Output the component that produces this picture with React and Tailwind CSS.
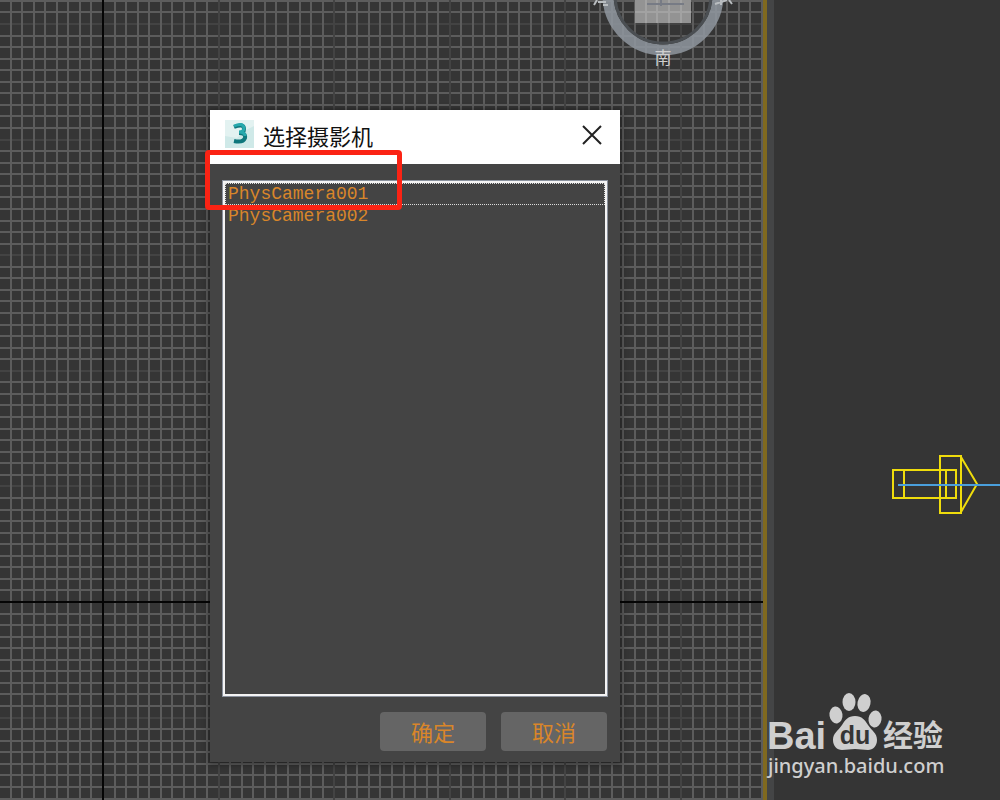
// App.jsx
import React, { useState } from 'react';

const CELL = 11.56;
const AXIS_X = 103;
const AXIS_Y = 602;

// grid steps counted from the origin axis, every tenth one is faint
const steps = (axis, max) => {
  const out = [];
  for (let i = -Math.floor(axis / CELL); axis + i * CELL < max; i++) {
    if (i !== 0) out.push({ pos: Math.round(axis + i * CELL), major: i % 10 === 0 });
  }
  return out;
};

const columns = steps(AXIS_X, 2600);
const rows = steps(AXIS_Y, 1600);

function Grid() {
  const color = l => (l.major ? '#434343' : '#5c5c5c');
  const order = list => [...list].sort((a, b) => b.major - a.major);
  return (
    <svg className="absolute inset-0 h-full w-full" aria-hidden="true" strokeWidth="2">
      {order(rows).map(l => <line key={'r' + l.pos} x1="0" x2="2600" y1={l.pos} y2={l.pos} stroke={color(l)} />)}
      {order(columns).map(l => <line key={'c' + l.pos} x1={l.pos} x2={l.pos} y1="0" y2="1600" stroke={color(l)} />)}
      <line x1="0" x2="2600" y1={AXIS_Y} y2={AXIS_Y} stroke="#050505" strokeWidth="2" />
      <line x1={AXIS_X} x2={AXIS_X} y1="0" y2="1600" stroke="#050505" strokeWidth="2" />
    </svg>
  );
}

function ViewCube() {
  return (
    <svg className="absolute top-0 right-[30px]" width="140" height="76" viewBox="0 0 140 76" aria-hidden="true">
      <circle cx="70" cy="-5" r="55" fill="none" stroke="#8f979f" strokeOpacity="0.85" strokeWidth="11" />
      <circle cx="70" cy="-5" r="48" fill="none" stroke="#4b4f53" strokeWidth="3" />
      <rect x="42" y="-10" width="56" height="33" fill="#939393" />
      <path d="M42 12h56M53 0v23M64 0v23M76 0v23M88 0v23" stroke="#a2a2a2" strokeWidth="2" />
      <path d="M54 4h36M68 0v6M85 4h6" stroke="#777b85" strokeWidth="2" fill="none" />
      <path d="M1 5l3-5M5 2h8M10 5h5M122 4l12-4M128 0v5M136 0l3 4" stroke="#b9bdc0" strokeWidth="2" />
      <text x="70" y="64" textAnchor="middle" fontSize="17" fill="#cfcfcf" className="font-['Noto_Sans_CJK_SC',sans-serif]">南</text>
    </svg>
  );
}

function CameraGizmo() {
  return (
    <svg className="absolute top-[450px] right-0" width="110" height="70" viewBox="0 0 110 70" fill="none" strokeWidth="2" aria-hidden="true">
      <g stroke="#efdc0c">
        <path d="M3 20h63v28H3zM14 20v28M56 20v28" />
        <path d="M50 6h21v57H50z" />
        <path d="M71 7l16 27-16 28" />
      </g>
      <path d="M8 35h102" stroke="#4a9fdc" />
    </svg>
  );
}

function Watermark() {
  return (
    <div className="absolute right-[52px] bottom-[22px] w-[182px] text-[#cfcfcf]">
      <svg width="182" height="76" viewBox="0 0 182 76" fill="currentColor" role="img" aria-label="Baidu 经验">
        <text x="1" y="59" fontSize="38" fontWeight="700" className="font-['Liberation_Sans',sans-serif]">Bai</text>
        <ellipse cx="70" cy="25" rx="6.5" ry="8.5" transform="rotate(-8 70 25)" />
        <ellipse cx="83" cy="12" rx="6.5" ry="9" />
        <ellipse cx="98" cy="13" rx="6.5" ry="9" transform="rotate(12 98 13)" />
        <ellipse cx="109" cy="29" rx="6.5" ry="8.5" transform="rotate(8 109 29)" />
        <path d="M89 26c7 0 10 4 13 9 4 6 9 8 9 15 0 6-4 10-9 10-5 0-8-1-13-1s-8 1-13 1c-5 0-9-4-9-10 0-7 5-9 9-15 3-5 6-9 13-9z" />
        <text x="89" y="54" textAnchor="middle" fontSize="25" fontWeight="700" fill="#353535" className="font-['Liberation_Sans',sans-serif]">du</text>
        <text x="117" y="56" fontSize="30" fontWeight="700" className="font-['Noto_Sans_CJK_SC',sans-serif]">经验</text>
      </svg>
      <p className="-mt-[12px] pl-[2px] font-['Noto_Sans',sans-serif] text-[20px] leading-[24px] font-medium whitespace-nowrap">jingyan.baidu.com</p>
    </div>
  );
}

function AppIcon() {
  return (
    <svg width="30" height="30" viewBox="0 0 30 30" aria-hidden="true">
      <rect width="29" height="28" fill="#e3f2f1" />
      <path d="M0 16l12 2 9-8 8-4v22H0z" fill="#cfe9e8" />
      <path d="M9 7q10-4 10 2 0 4-5 4 7 0 6 5-2 5-11 3" fill="none" stroke="#0f777c" strokeWidth="4" />
      <path d="M9 6q9-4 10 2 0 4-5 4 6 0 6 4" fill="none" stroke="#27a9ad" strokeWidth="3" />
    </svg>
  );
}

const cameras = ['PhysCamera001', 'PhysCamera002'];

function CameraDialog() {
  const [current, setCurrent] = useState(0);
  const button = 'h-[39px] w-[106px] rounded-[4px] bg-[#656565] text-[22px] leading-[39px] text-[#d9862a]';

  return (
    <section
      role="dialog"
      aria-labelledby="dialog-title"
      className="absolute top-[110px] left-[210px] w-[410px] bg-[#444] font-['Noto_Sans_CJK_SC',sans-serif] shadow-[0_1px_6px_2px_rgba(0,0,0,0.35)]"
    >
      <header className="flex h-[54px] items-center bg-white pr-[16px] pb-[4px] pl-[15px]">
        <AppIcon />
        <h1 id="dialog-title" className="ml-[8px] flex-1 text-[22px] leading-[32px] text-[#111]">选择摄影机</h1>
        <button aria-label="关闭" className="flex h-[24px] w-[24px] items-center justify-center">
          <svg width="20" height="20" viewBox="0 0 20 20" stroke="#222" strokeWidth="2" aria-hidden="true">
            <path d="M1 1l18 18M19 1L1 19" />
          </svg>
        </button>
      </header>
      <div className="px-[12px] pt-[16px] pb-[11px]">
        <ul
          role="listbox"
          aria-labelledby="dialog-title"
          className="h-[517px] border border-[#8b929e] font-['Liberation_Mono',monospace] text-[18px] leading-[20px] text-[#d9862a] outline-2 -outline-offset-3 outline-[#f4f4f4]"
        >
          {cameras.map((name, i) => (
            <li
              key={name}
              role="option"
              aria-selected={i === current}
              onClick={() => setCurrent(i)}
              className={'mx-[2px] h-[22px] border border-dotted pl-[2px] first:mt-[2px] ' + (i === current ? 'border-[#ddd]' : 'border-transparent')}
            >
              {name}
            </li>
          ))}
        </ul>
        <div className="mt-[15px] flex justify-end gap-[15px] pr-px">
          <button className={button}>确定</button>
          <button className={button}>取消</button>
        </div>
      </div>
      <div className="pointer-events-none absolute top-[40px] -left-[5px] h-[60px] w-[197px] rounded-[4px] border-5 border-[#fb2314]" />
    </section>
  );
}

export default function App() {
  return (
    <main className="relative flex h-screen min-h-[800px] overflow-hidden bg-[#353535]">
      <div className="relative flex-1 overflow-hidden">
        <Grid />
        <ViewCube />
      </div>
      <div className="relative w-[23.7%] border-l-4 border-[#80691f]">
        <div className="h-full w-[7px] bg-[#444546]" />
        <CameraGizmo />
        <Watermark />
      </div>
      <CameraDialog />
    </main>
  );
}
